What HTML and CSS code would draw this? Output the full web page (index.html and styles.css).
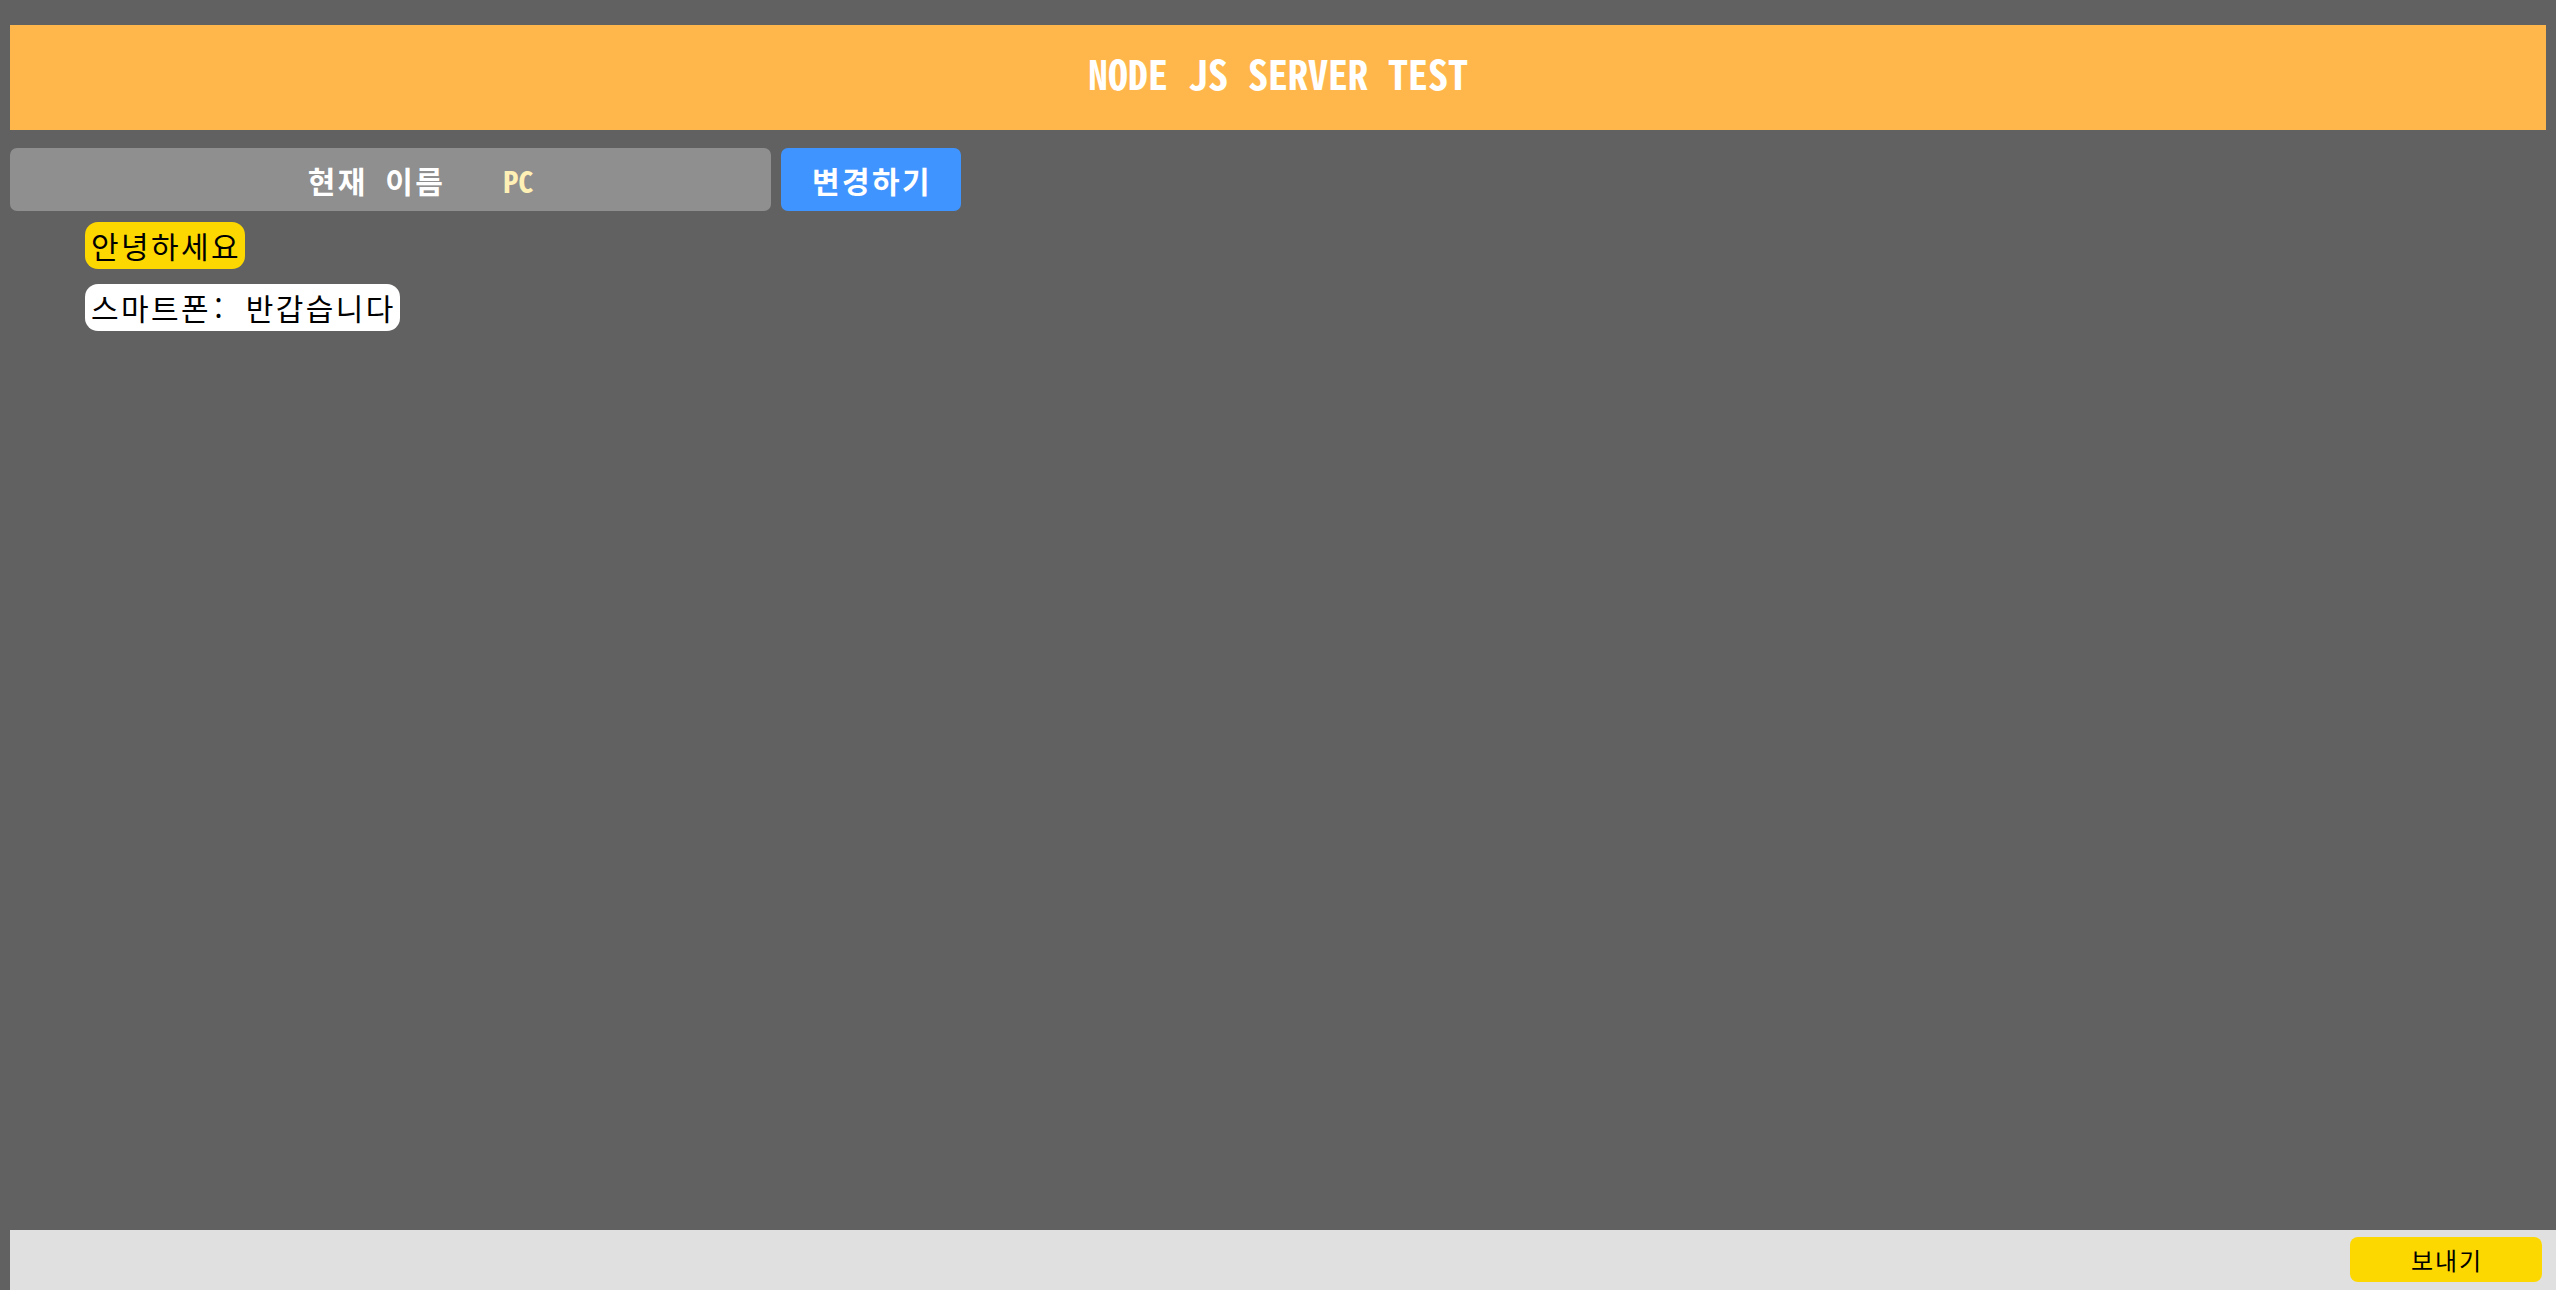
FILE: index.html
```html
<!DOCTYPE html>
<html lang="ko">
<head>
<meta charset="utf-8">
<title>NODE JS SERVER TEST</title>
<link rel="stylesheet" href="styles.css">
</head>
<body>
<div class="page">
  <header class="title">NODE JS SERVER TEST</header>
  <div class="name-row">
    <div class="name-bar">
      <span class="name-label">현재 이름</span>
      <span class="name-value">PC</span>
    </div>
    <button class="change-btn">변경하기</button>
  </div>
  <ul class="chat">
    <li class="msg msg-mine">안녕하세요</li>
    <li class="msg msg-other">스마트폰: 반갑습니다</li>
  </ul>
  <form class="send-bar">
    <input class="send-input" type="text">
    <button class="send-btn" type="button">보내기</button>
  </form>
</div>
</body>
</html>
```
FILE: styles.css
```css
html, body {
  margin: 0;
  padding: 0;
  background: #616161;
  font-family: "Noto Sans Mono CJK KR", "Noto Sans CJK KR", "DejaVu Sans Mono", monospace;
}

.page {
  height: 100vh;
  box-sizing: border-box;
  padding: 25px 10px 0 10px;
  display: flex;
  flex-direction: column;
  overflow: hidden;
}

.title {
  height: 105px;
  box-sizing: border-box;
  padding-bottom: 9px;
  background: #ffb74b;
  color: #ffffff;
  font-weight: bold;
  font-size: 40px;
  display: flex;
  align-items: center;
  justify-content: center;
  flex-shrink: 0;
}

.name-row {
  margin-top: 18px;
  display: flex;
  gap: 10px;
  height: 63px;
  flex-shrink: 0;
}

.name-bar {
  width: 761px;
  box-sizing: border-box;
  padding-left: 60px;
  background: #8f8f8f;
  border-radius: 7px;
  display: flex;
  align-items: center;
  justify-content: center;
  font-size: 30px;
  font-weight: bold;
}

.name-label {
  color: #ffffff;
  letter-spacing: 0.08em;
}

.name-value {
  color: #fff0b5;
  margin-left: 58px;
}

.change-btn {
  width: 180px;
  border: none;
  border-radius: 7px;
  background: #4094ff;
  color: #ffffff;
  font-family: inherit;
  font-size: 30px;
  font-weight: bold;
  letter-spacing: 0.08em;
  padding: 0 0 0 2px;
}

.chat {
  list-style: none;
  margin: 11px 0 0 0;
  padding: 0 0 0 75px;
  flex: 1;
  display: flex;
  flex-direction: column;
  align-items: flex-start;
  gap: 15px;
}

.msg {
  font-size: 30px;
  line-height: 43px;
  letter-spacing: 0.08em;
  padding: 2px 4px 2px 6px;
  border-radius: 13px;
  color: #000000;
}

.msg-mine {
  background: #fcd800;
}

.msg-other {
  background: #ffffff;
}

.send-bar {
  margin: 0 -10px 0 0;
  height: 60px;
  flex-shrink: 0;
  background: #e0e0e0;
  display: flex;
  align-items: flex-start;
  padding: 7px 14px 0 0;
  box-sizing: border-box;
}

.send-input {
  flex: 1;
  border: none;
  background: transparent;
  outline: none;
  height: 45px;
}

.send-btn {
  width: 192px;
  height: 45px;
  border: none;
  border-radius: 8px;
  background: #fcd800;
  color: #000000;
  font-family: inherit;
  font-size: 24px;
  letter-spacing: 0.08em;
  padding: 0 0 0 2px;
}
```
